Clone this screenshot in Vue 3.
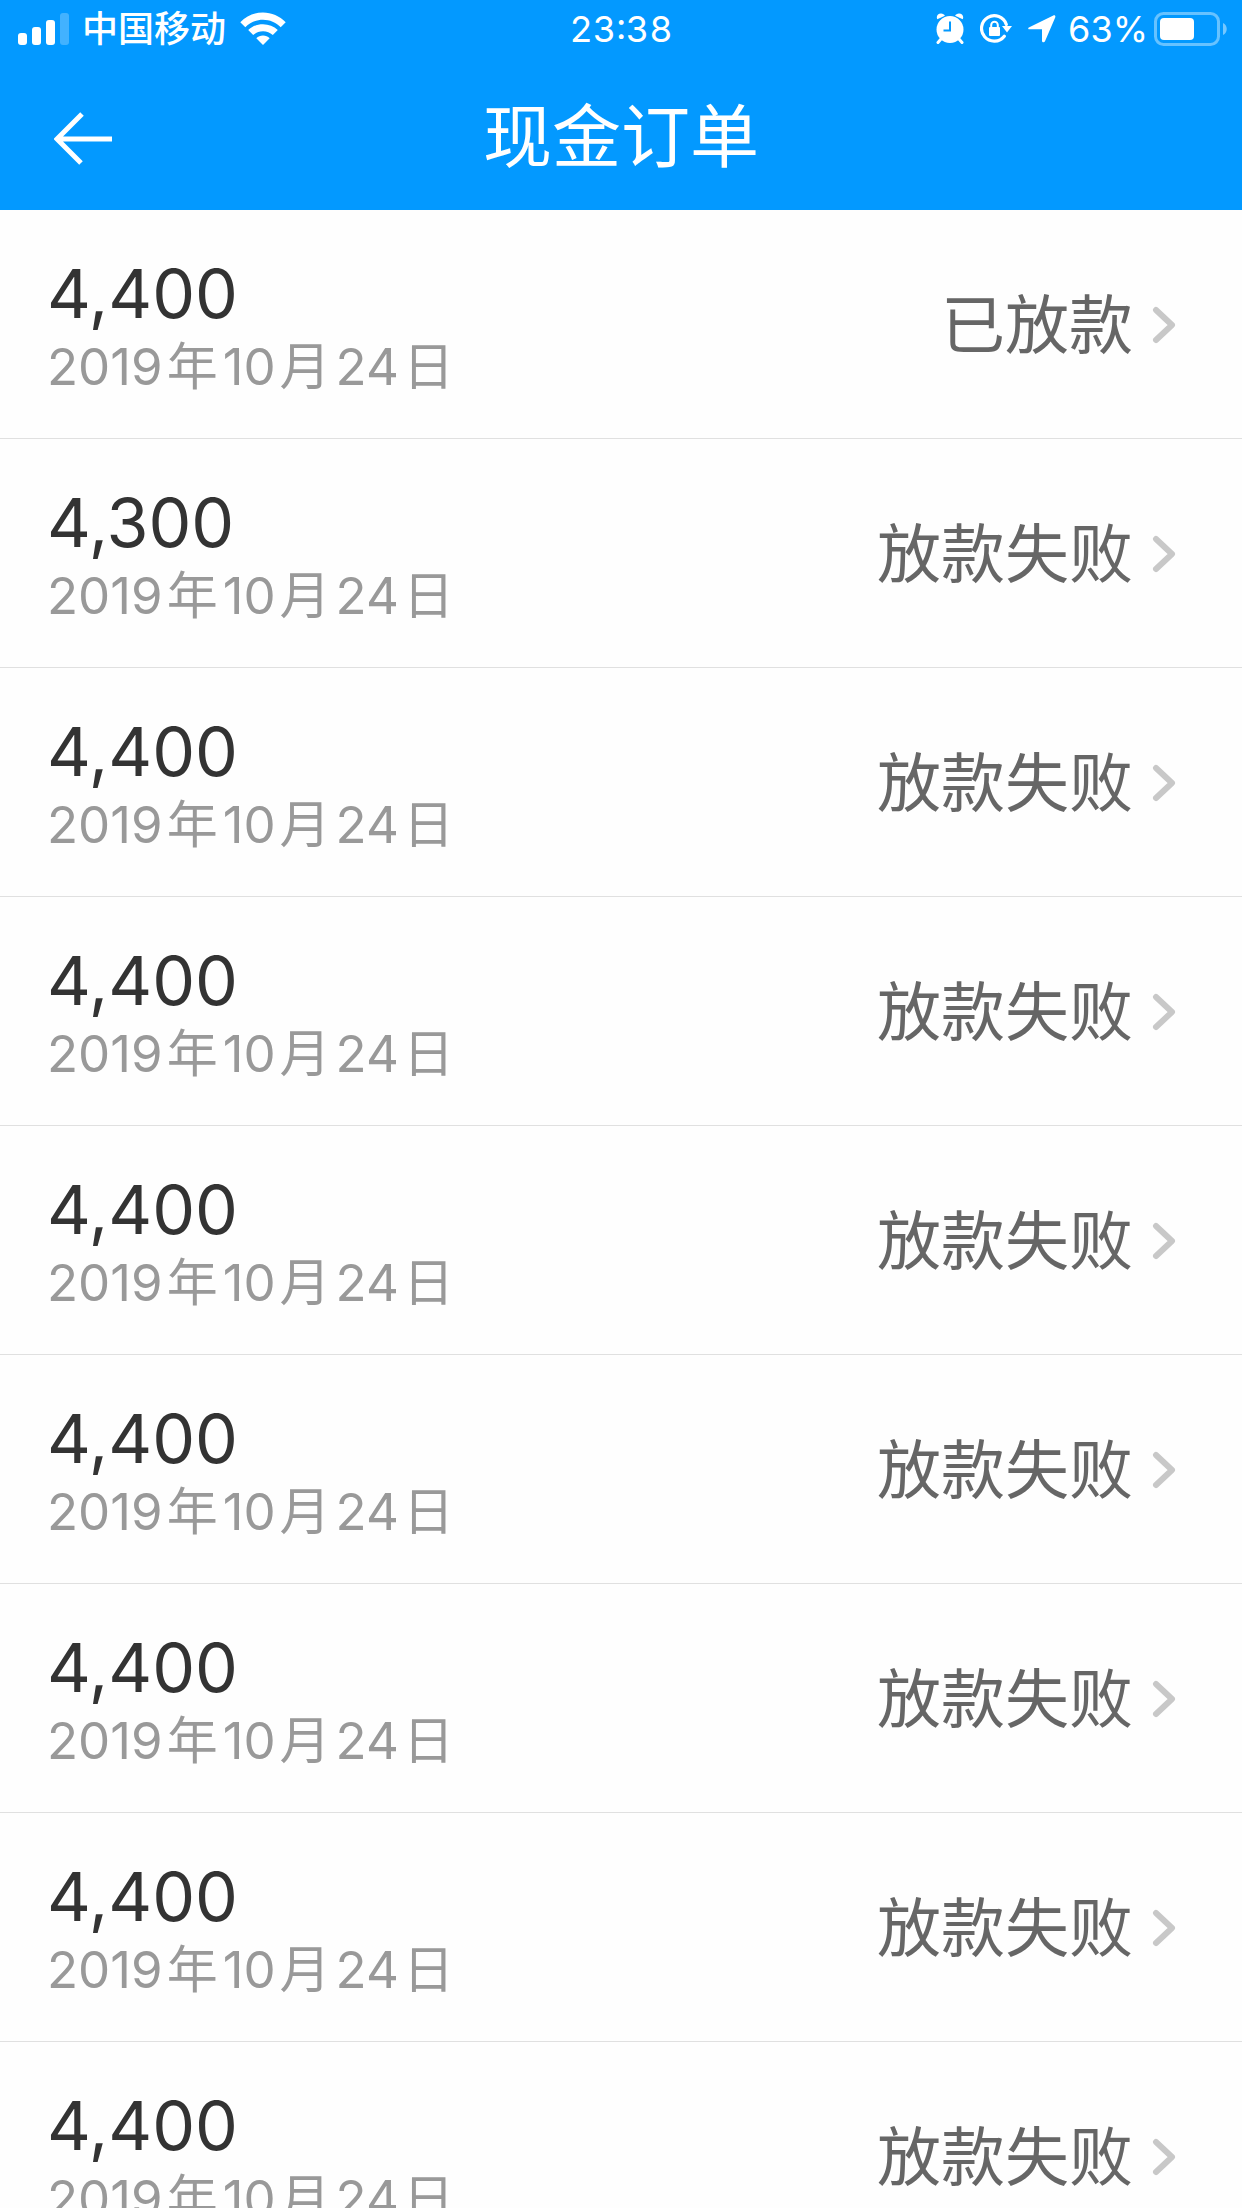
<template>
  <div class="page">
    <header class="header">
      <div class="status-bar">
        <div class="status-left">
          <svg class="icon-signal" viewBox="0 0 52 34" aria-hidden="true">
            <rect x="0" y="21" width="9" height="12" rx="3" />
            <rect x="14" y="15" width="9" height="18" rx="3" />
            <rect x="28" y="8" width="9" height="25" rx="3" />
            <rect x="42" y="1" width="9" height="32" rx="3" opacity="0.25" />
          </svg>
          <span class="carrier">中国移动</span>
          <svg class="icon-wifi" viewBox="0 0 46 34" aria-hidden="true">
            <path d="M0.3 10.2C6.5 4 14.4 0.5 23 0.5s16.5 3.5 22.7 9.7L40.7 15.2C35.9 10.5 29.8 7.8 23 7.8S10.1 10.5 5.3 15.2z" />
            <path d="M8.2 18.1C12.2 14.3 17.3 12.2 23 12.2s10.8 2.1 14.8 5.9L32.8 23.1C30.1 20.6 26.8 19.3 23 19.3S15.9 20.6 13.2 23.1z" />
            <path d="M16.3 26.2C18.2 24.5 20.4 23.6 23 23.6s4.8 0.9 6.7 2.6L23 33z" />
          </svg>
        </div>
        <span class="clock">23:38</span>
        <div class="status-right">
          <svg class="icon-alarm" viewBox="0 0 28 32" aria-hidden="true">
            <circle cx="14" cy="16.5" r="13.5" />
            <path class="cut" d="M0 9L9.5 1M28 9L18.5 1" />
            <path d="M1.3 6.2C-0.3 3 2.2 0.5 5 0.6C7 0.7 8.2 1.6 8.9 2.7zM26.7 6.2C28.3 3 25.8 0.5 23 0.6C21 0.7 19.8 1.6 19.1 2.7z" />
            <path class="stroke" d="M5 26l-3 3.5M23 26l3 3.5" stroke-width="3" />
            <path class="cut" d="M14 8.5v9H7.5" />
          </svg>
          <svg class="icon-lock" viewBox="0 0 32 30" aria-hidden="true">
            <path class="stroke" d="M24.3 22.2A12.7 12.7 0 1 1 26.3 10.5" stroke-width="3.2" />
            <path d="M22 12h10l-5 6.5z" />
            <rect x="9" y="13" width="11" height="9" rx="1" />
            <path class="stroke" d="M11.2 14v-3a3.3 3.3 0 0 1 6.6 0v3" stroke-width="2" />
          </svg>
          <svg class="icon-location" viewBox="0 0 28 28" aria-hidden="true">
            <path d="M1.3 12.2L25.3 0.5c1.5-0.7 2.5 0.5 1.9 1.9L17 26.3c-0.7 1.6-3 1.3-3-0.6V14.3H2C-0.2 14.3-0.4 13 1.3 12.2z" />
          </svg>
          <span class="percent">63%</span>
          <svg class="icon-battery" viewBox="0 0 74 34" aria-hidden="true">
            <rect class="shell" x="1.5" y="1.5" width="63" height="31" rx="8" />
            <rect x="6" y="6" width="34" height="22" rx="4" />
            <path d="M69 11c5 2 5 10 0 12z" opacity="0.45" />
          </svg>
        </div>
      </div>
      <nav class="nav-bar">
        <button class="back" type="button" aria-label="返回">
          <svg viewBox="0 0 58 54" aria-hidden="true">
            <path d="M28 2L3 27l24 24M4 27h54" />
          </svg>
        </button>
        <h1 class="title">现金订单</h1>
      </nav>
    </header>

    <ul class="orders">
      <li v-for="order in orders" :key="order.id">
        <a class="order" href="#">
          <div class="info">
            <span class="amount">{{ order.amount }}</span>
            <span class="date">
              <template v-for="part in order.date" :key="part.unit">{{ part.value }}<span class="unit">{{ part.unit }}</span></template>
            </span>
          </div>
          <span class="state">{{ order.state }}</span>
          <svg class="chevron" viewBox="0 0 24 38" aria-hidden="true">
            <path d="M4 4l16 15L4 34" />
          </svg>
        </a>
      </li>
    </ul>
  </div>
</template>

<script setup>
import { ref } from 'vue'

const date = [
  { value: '2019', unit: '年' },
  { value: '10', unit: '月' },
  { value: '24', unit: '日' }
]

const orders = ref([
  { id: 1, amount: '4,400', date, state: '已放款' },
  { id: 2, amount: '4,300', date, state: '放款失败' },
  { id: 3, amount: '4,400', date, state: '放款失败' },
  { id: 4, amount: '4,400', date, state: '放款失败' },
  { id: 5, amount: '4,400', date, state: '放款失败' },
  { id: 6, amount: '4,400', date, state: '放款失败' },
  { id: 7, amount: '4,400', date, state: '放款失败' },
  { id: 8, amount: '4,400', date, state: '放款失败' },
  { id: 9, amount: '4,400', date, state: '放款失败' }
])
</script>

<style>
body {
  margin: 0;
  background: #fefefe;
}
</style>

<style scoped>
.page {
  display: flex;
  flex-direction: column;
  height: 100vh;
  font-family: Inter, "Noto Sans CJK SC", sans-serif;
  color: #333;
}

.header {
  flex: none;
  background: #0399ff;
  color: #fff;
}

.header svg {
  flex: none;
  display: block;
  fill: #fff;
}

/* Status bar */
.status-bar {
  display: grid;
  grid-template-columns: 1fr auto 1fr;
  align-items: center;
  height: 58px;
  padding: 0 14px;
  font-size: 36px;
  line-height: 40px;
}

.status-left,
.status-right {
  display: flex;
  align-items: center;
}

.status-left {
  padding-left: 4px;
}

.status-right {
  justify-content: flex-end;
}

.carrier {
  margin: 0 14px 0 12px;
  font-weight: 500;
}

.clock {
  font-variant-numeric: tabular-nums;
}

.percent {
  margin: 0 6px 0 12px;
}

.icon-signal {
  width: 52px;
  height: 34px;
}

.icon-wifi {
  width: 46px;
  height: 34px;
}

.icon-alarm {
  width: 28px;
  height: 32px;
  margin-right: 16px;
}

.icon-lock {
  width: 32px;
  height: 30px;
  margin-right: 16px;
}

.icon-location {
  width: 28px;
  height: 28px;
}

.icon-battery {
  width: 74px;
  height: 34px;
}

.header .stroke {
  fill: none;
  stroke: #fff;
  stroke-linecap: round;
}

.header .cut {
  fill: none;
  stroke: #0399ff;
  stroke-width: 2;
}

.header .shell {
  fill: none;
  stroke: #fff;
  stroke-width: 3;
  opacity: 0.4;
}

/* Title bar */
.nav-bar {
  display: grid;
  grid-template-columns: 1fr auto 1fr;
  align-items: center;
  height: 152px;
  padding: 0 54px;
}

.back {
  justify-self: start;
  padding: 10px 0 0;
  border: 0;
  background: none;
  cursor: pointer;
}

.back svg {
  width: 58px;
  height: 54px;
  fill: none;
  stroke: #fff;
  stroke-width: 5;
}

.title {
  margin: 0;
  padding-top: 6px;
  font-size: 69px;
  font-weight: 400;
  line-height: 100px;
}

/* Orders */
.orders {
  flex: 1;
  min-height: 0;
  margin: 0;
  padding: 0;
  list-style: none;
  overflow-y: auto;
  scrollbar-width: none;
}

.order {
  display: flex;
  align-items: center;
  padding: 43px 66px 41px 47px;
  border-bottom: 1px solid #e0e0e0;
  color: inherit;
  text-decoration: none;
}

.info {
  flex: 1;
  display: flex;
  flex-direction: column;
  gap: 4px;
}

.amount {
  font-size: 68px;
  line-height: 80px;
}

.date {
  font-size: 51px;
  line-height: 60px;
  color: #999;
}

.unit {
  margin: 0 5px 0 4px;
}

.state {
  font-size: 64px;
  line-height: 80px;
  color: #666;
}

.chevron {
  flex: none;
  width: 24px;
  height: 38px;
  margin-left: 19px;
  fill: none;
  stroke: #c8c8c8;
  stroke-width: 6;
  stroke-linecap: round;
  stroke-linejoin: round;
}
</style>
